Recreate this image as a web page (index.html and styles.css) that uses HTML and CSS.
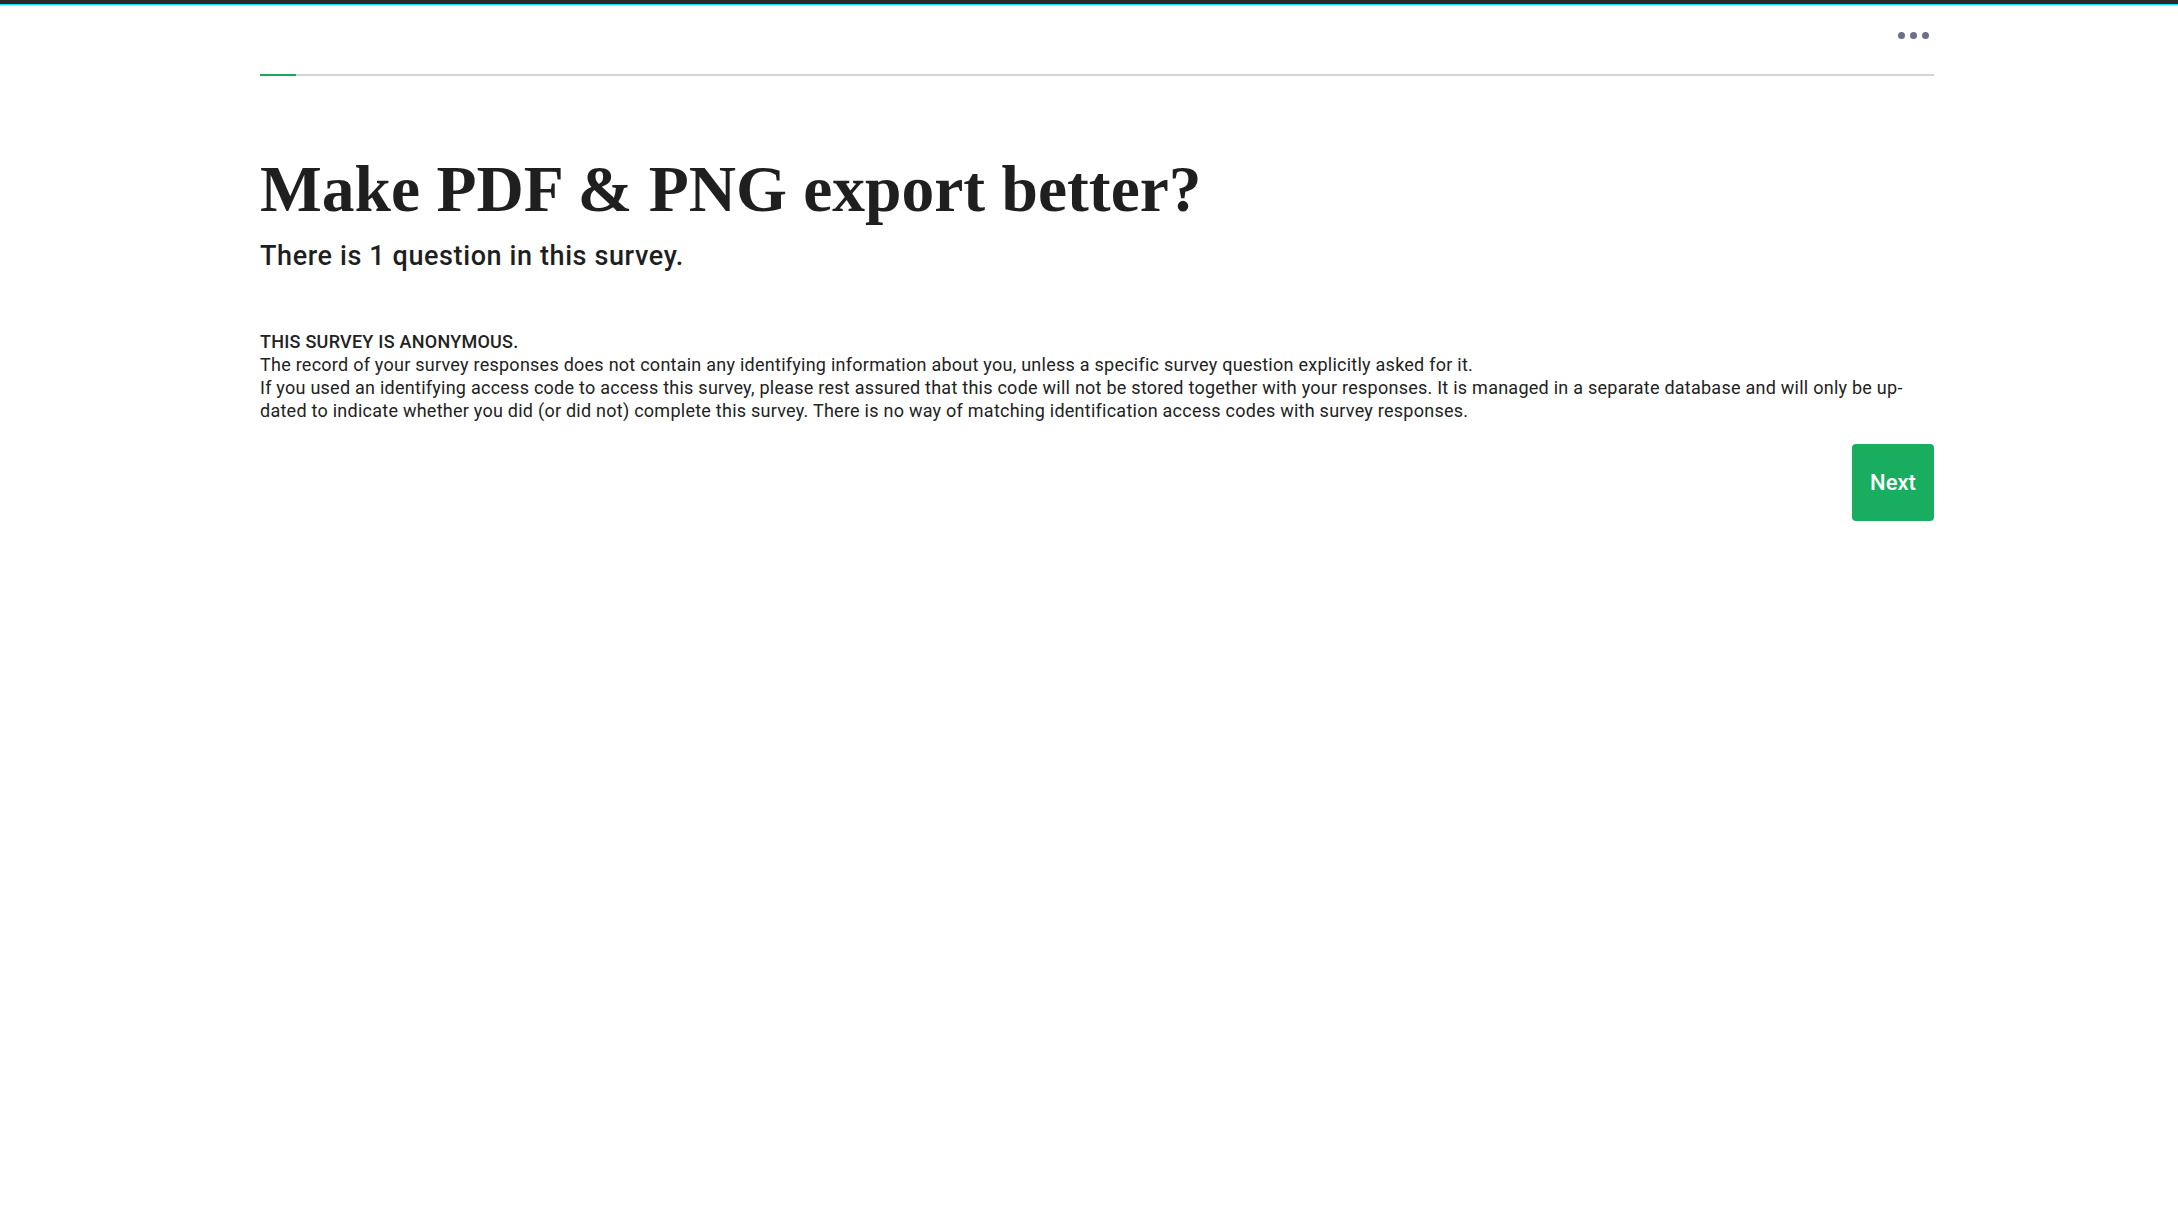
FILE: index.html
```html
<!DOCTYPE html>
<html lang="en">
<head>
<meta charset="utf-8">
<title>Make PDF &amp; PNG export better?</title>
<link rel="stylesheet" href="styles.css">
</head>
<body>
<div class="topbar"></div>
<div class="page">
  <header class="header">
    <button class="menu" aria-label="Menu">
      <span class="dot"></span><span class="dot"></span><span class="dot"></span>
    </button>
  </header>
  <div class="progress"><div class="progress-fill" style="width: 36px"></div></div>
  <main class="content">
    <h1 class="title">Make PDF &amp; PNG export better?</h1>
    <h2 class="subtitle">There is 1 question in this survey.</h2>
    <div class="notice">
      <p class="notice-head">THIS SURVEY IS ANONYMOUS.</p>
      <p>The record of your survey responses does not contain any identifying information about you, unless a specific survey question explicitly asked for it.</p>
      <p>If you used an identifying access code to access this survey, please rest assured that this code will not be stored together with your responses. It is managed in a separate database and will only be up&shy;dated to indicate whether you did (or did not) complete this survey. There is no way of matching identification access codes with survey responses.</p>
    </div>
    <div class="actions">
      <button class="btn-next">Next</button>
    </div>
  </main>
</div>
</body>
</html>
```

FILE: styles.css
```css
html, body {
  margin: 0;
  padding: 0;
  background: #ffffff;
}

body {
  font-family: Roboto, "Noto Sans", sans-serif;
  color: #222222;
}

.topbar {
  height: 4px;
  background: #2b2b2b;
  border-bottom: 1px solid #00e5ff;
}

.page {
  width: 1674px;
  margin-left: 260px;
}

.header {
  height: 60px;
  display: flex;
  align-items: center;
  justify-content: flex-end;
}

.menu {
  display: flex;
  gap: 5px;
  padding: 0 5px 0 0;
  border: 0;
  background: transparent;
}

.dot {
  width: 7px;
  height: 7px;
  border-radius: 50%;
  background: #6b7088;
}

.progress {
  margin-top: 9px;
  height: 2px;
  background: #d4d4d8;
}

.progress-fill {
  height: 100%;
  background: #18a85e;
}

.title {
  margin: 75px 0 0;
  font-family: "Liberation Serif", serif;
  font-weight: 700;
  font-size: 65.5px;
  line-height: 76px;
  color: #1f1f1f;
}

.subtitle {
  margin: 12px 0 0;
  font-family: Roboto, sans-serif;
  font-weight: 500;
  font-size: 27px;
  letter-spacing: 0.6px;
  line-height: 34px;
  color: #1f1f1f;
}

.notice {
  margin-top: 57px;
  font-size: 18px;
  letter-spacing: 0.25px;
  line-height: 23px;
  color: #222222;
}

.notice p {
  margin: 0;
}

.notice-head {
  font-weight: 500;
}

.actions {
  display: flex;
  justify-content: flex-end;
  margin-top: 22px;
}

.btn-next {
  width: 82px;
  height: 77px;
  border: 0;
  border-radius: 4px;
  background: #19ae5f;
  color: #ffffff;
  font-family: Roboto, sans-serif;
  font-weight: 500;
  font-size: 22px;
}
```
